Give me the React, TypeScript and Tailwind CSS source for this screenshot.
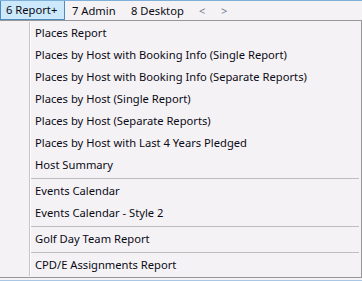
import React from 'react';

type Item = { label: string } | { sep: true };

const items: Item[] = [
  { label: 'Places Report' },
  { label: 'Places by Host with Booking Info (Single Report)' },
  { label: 'Places by Host with Booking Info (Separate Reports)' },
  { label: 'Places by Host (Single Report)' },
  { label: 'Places by Host (Separate Reports)' },
  { label: 'Places by Host with Last 4 Years Pledged' },
  { label: 'Host Summary' },
  { sep: true },
  { label: 'Events Calendar' },
  { label: 'Events Calendar - Style 2' },
  { sep: true },
  { label: 'Golf Day Team Report' },
  { sep: true },
  { label: 'CPD/E Assignments Report' },
];

export default function App() {
  return (
    <div className="w-[362px] h-[281px] overflow-hidden bg-[#f5f2f5] font-['Segoe_UI','Noto_Sans',sans-serif] text-[11.2px] text-[#0a0a14] flex flex-col">
      {/* Menu bar */}
      <div className="h-[20px] border-t border-[#7eb0da] flex items-stretch shrink-0">
        <div className="w-[65px] bg-[#cce8fb] border border-t-0 border-[#4d8cbf] flex items-center pl-[5px] leading-none">
          6 Report+
        </div>
        <div className="w-[66px] flex items-center pl-[7px] leading-none">7 Admin</div>
        <div className="w-[68px] flex items-center leading-none">8 Desktop</div>
        <div className="w-[22px] flex items-center text-[#6b7a90] leading-none">&lt;</div>
        <div className="flex items-center text-[#6b7a90] leading-none">&gt;</div>
      </div>

      {/* Dropdown */}
      <div className="h-[258px] border-t border-r border-b border-[#979797] bg-[#f5f2f6] flex shrink-0">
        <div className="w-[29px] shrink-0" />
        <div className="w-[1px] bg-[#c5c5c5] my-[1px]" />
        <div className="w-[1px] bg-white my-[1px]" />
        <div className="flex-1 flex flex-col pt-[1px] pr-[2px]">
          {items.map((it, i) =>
            'sep' in it ? (
              <div key={i} className="h-[4px] flex items-center">
                <div className="h-[1px] w-full bg-[#bdbdbd]" />
              </div>
            ) : (
              <div key={i} className="h-[22px] flex items-center pl-[4px] pt-[1px] whitespace-nowrap">
                {it.label}
              </div>
            )
          )}
        </div>
      </div>
      <div className="flex-1 border-b border-[#a9c6e4]" />
    </div>
  );
}
